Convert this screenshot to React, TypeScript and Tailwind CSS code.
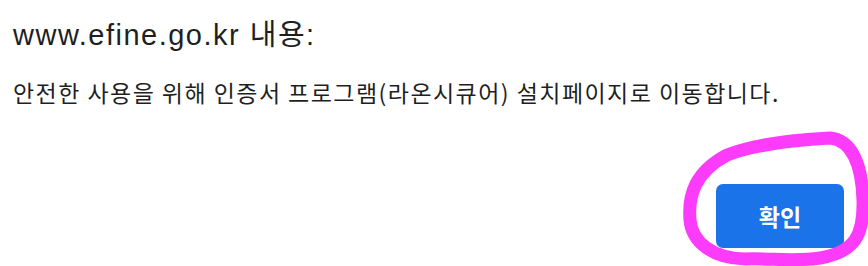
export default function App() {
  return (
    <div className="relative w-[868px] h-[266px] bg-white overflow-hidden font-['Liberation_Sans','Noto_Sans_CJK_KR',sans-serif] text-[#1f1f1f]">
      <div className="flex flex-col pl-[13px] pt-[18px]">
        <h1 className="text-[29px] leading-[34px] font-normal tracking-[1.5px]">www.efine.go.kr 내용:</h1>
        <p className="mt-[25px] text-[23px] leading-[30px] tracking-[1.45px] font-['Noto_Sans_CJK_KR',sans-serif]">
          안전한 사용을 위해 인증서 프로그램(라온시큐어) 설치페이지로 이동합니다.
        </p>
      </div>
      <div className="flex justify-end pr-[24px] pt-[77px]">
        <button className="w-[128px] h-[64px] rounded-[7px] bg-[#1a73e8] text-white text-[23px] font-bold font-['Noto_Sans_CJK_KR',sans-serif]">
          확인
        </button>
      </div>
      <svg className="absolute inset-0 pointer-events-none" width="868" height="266" viewBox="0 0 868 266">
        <path
          d="M 727 155 C 750 146, 790 140, 830 138 C 852 140, 862 165, 863 200 C 864 235, 855 252, 820 258 C 795 262, 770 258, 745 259 C 712 258, 692 242, 690 220 C 688 195, 695 172, 727 155 Z"
          fill="none"
          stroke="#fc3cfa"
          strokeWidth="13"
          strokeLinecap="round"
          strokeLinejoin="round"
        />
      </svg>
    </div>
  );
}
